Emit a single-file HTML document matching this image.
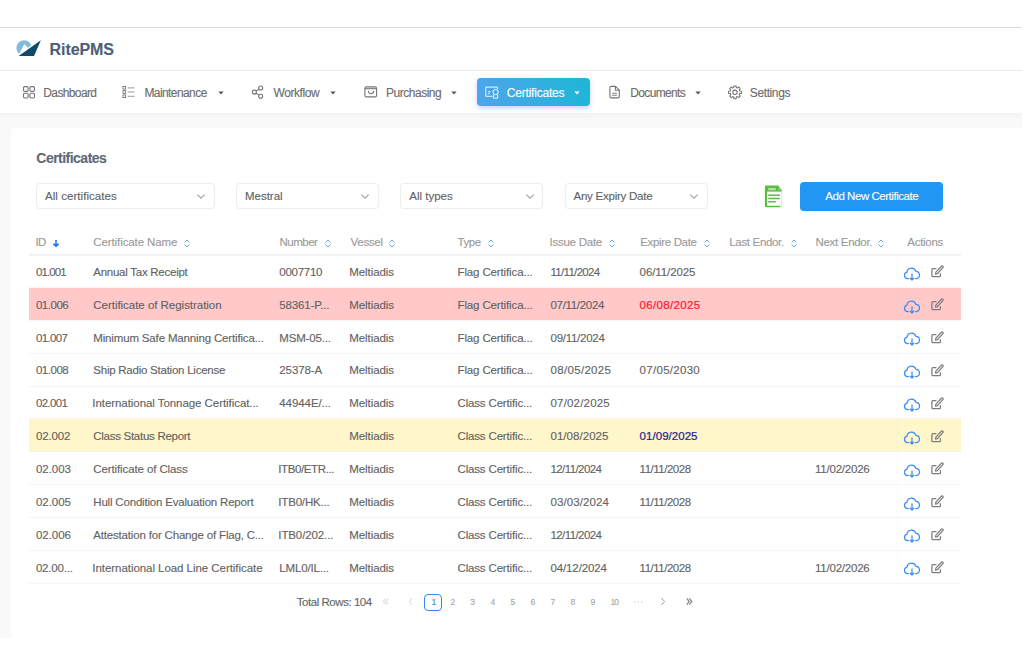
<!DOCTYPE html>
<html lang="en"><head><meta charset="utf-8"><title>RitePMS - Certificates</title>
<style>
html,body{margin:0;padding:0;background:#fff}
body{width:1024px;height:650px;position:relative;overflow:hidden;font-family:"Liberation Sans", sans-serif}
.b,.t,.i{position:absolute;display:block}
.t{white-space:nowrap;line-height:16px;height:16px;-webkit-text-stroke:.12px currentColor}
.i{overflow:visible}
</style></head>
<body>
<div class="b" style="left:0px;top:27px;width:1022px;height:1px;background:#dadada"></div>
<div class="b" style="left:0px;top:70px;width:1022px;height:1px;background:#e8e8e8"></div>
<div class="b" style="left:0px;top:113px;width:1022px;height:525px;background:#f9f9f9"></div>
<div class="b" style="left:0px;top:113px;width:1022px;height:6px;background:linear-gradient(#f2f2f2,#f9f9f9)"></div>
<div class="b" style="left:11px;top:128px;width:1013px;height:510px;background:#fff;border-radius:4px 0 0 4px"></div>
<div class="b" style="left:477px;top:78px;width:113px;height:28px;background:linear-gradient(90deg,#4ea5e9,#1db7d7);border-radius:4px;box-shadow:0 2px 5px rgba(120,110,255,.35)"></div>
<div class="b" style="left:36px;top:183px;width:179px;height:26px;box-sizing:border-box;border:1px solid #eeeeee;border-radius:4px;background:#fff;box-shadow:0 0 2px rgba(0,0,0,.03)"></div>
<div class="b" style="left:236px;top:183px;width:143px;height:26px;box-sizing:border-box;border:1px solid #eeeeee;border-radius:4px;background:#fff;box-shadow:0 0 2px rgba(0,0,0,.03)"></div>
<div class="b" style="left:400px;top:183px;width:143px;height:26px;box-sizing:border-box;border:1px solid #eeeeee;border-radius:4px;background:#fff;box-shadow:0 0 2px rgba(0,0,0,.03)"></div>
<div class="b" style="left:565px;top:183px;width:143px;height:26px;box-sizing:border-box;border:1px solid #eeeeee;border-radius:4px;background:#fff;box-shadow:0 0 2px rgba(0,0,0,.03)"></div>
<div class="b" style="left:800px;top:182px;width:143px;height:29px;background:#2196f3;border-radius:4px"></div>
<div class="b" style="left:29px;top:254px;width:932px;height:2px;background:linear-gradient(#efefef,#f6f6f6)"></div>
<div class="b" style="left:29px;top:287.05px;width:932px;height:1px;background:#f5f5f5"></div>
<div class="b" style="left:29px;top:287.90000000000003px;width:932px;height:32px;background:#ffc9c9"></div>
<div class="b" style="left:29px;top:319.90000000000003px;width:932px;height:1px;background:#f5f5f5"></div>
<div class="b" style="left:29px;top:352.75px;width:932px;height:1px;background:#f5f5f5"></div>
<div class="b" style="left:29px;top:385.6px;width:932px;height:1px;background:#f5f5f5"></div>
<div class="b" style="left:29px;top:418.45000000000005px;width:932px;height:1px;background:#f5f5f5"></div>
<div class="b" style="left:29px;top:419.3px;width:932px;height:32px;background:#fff6ca"></div>
<div class="b" style="left:29px;top:451.3px;width:932px;height:1px;background:#f5f5f5"></div>
<div class="b" style="left:29px;top:484.15000000000003px;width:932px;height:1px;background:#f5f5f5"></div>
<div class="b" style="left:29px;top:517.0px;width:932px;height:1px;background:#f5f5f5"></div>
<div class="b" style="left:29px;top:549.85px;width:932px;height:1px;background:#f5f5f5"></div>
<div class="b" style="left:29px;top:582.7px;width:932px;height:1px;background:#f5f5f5"></div>
<div class="b" style="left:897px;top:256px;width:1px;height:327px;background:rgba(0,0,0,.018)"></div>
<div class="b" style="left:424px;top:594px;width:18px;height:17px;box-sizing:border-box;border:1px solid #2d8cf0;border-radius:4px"></div>
<svg class="i" style="left:14px;top:38px" width="30" height="20" viewBox="14 38 30 20" >
<defs><clipPath id="lc"><polygon points="10,30 44,30 44,36.6 15.5,56.4 10,56.4"/></clipPath></defs>
<circle cx="24.1" cy="47.9" r="7.7" fill="#83bbdd" clip-path="url(#lc)"/>
<polygon points="17.6,57 24.4,44.1 28.4,48.4 33,52 24,58" fill="#fff"/>
<polygon points="18.6,55.9 40.9,40.3 34,55.9" fill="#0f4a68"/>
</svg>
<svg class="i" style="left:22px;top:85px" width="14" height="15" viewBox="22 85 14 15" >
<g fill="none" stroke="#747474" stroke-width="1.1">
<rect x="23.5" y="86.6" width="4.6" height="4.8" rx="1.2"/><rect x="29.9" y="86.6" width="4.6" height="4.8" rx="1.2"/>
<rect x="23.5" y="93.2" width="4.6" height="4.8" rx="1.2"/><rect x="29.9" y="93.2" width="4.6" height="4.8" rx="1.2"/></g></svg>
<svg class="i" style="left:121px;top:85px" width="15" height="15" viewBox="121 85 15 15" >
<g fill="none" stroke="#747474" stroke-width="0.9">
<rect x="123" y="86.4" width="2.7" height="2.7"/><rect x="123" y="90.6" width="2.7" height="2.7"/><rect x="123" y="94.9" width="2.7" height="2.7"/></g>
<g stroke="#9a9a9a" stroke-width="1"><path d="M127.8 87.9H134.5M127.8 92H134.5M127.8 96.3H134.5"/></g></svg>
<svg class="i" style="left:250px;top:84px" width="16" height="16" viewBox="250 84 16 16" >
<g fill="none" stroke="#747474" stroke-width="1.1">
<circle cx="260.7" cy="88" r="2"/><circle cx="254.4" cy="92.1" r="2"/><circle cx="260.7" cy="96.2" r="2"/>
<path d="M256.2 91L258.9 89.1M256.2 93.2L258.9 95.1"/></g></svg>
<svg class="i" style="left:363px;top:85px" width="16" height="14" viewBox="363 85 16 14" >
<g fill="none" stroke="#747474" stroke-width="1.1">
<rect x="364.9" y="86.9" width="11.7" height="10" rx="1.5"/><path d="M365 88.7H376.6"/><path d="M368.3 90.8a2.7 2.9 0 0 0 5.4 0"/></g></svg>
<svg class="i" style="left:484px;top:85px" width="16" height="15" viewBox="484 85 16 15" >
<g fill="none" stroke="#fff" stroke-width="1" stroke-opacity=".92">
<path d="M492.6 96.3H485.8V87.1H497.6V89"/><path d="M488.2 91.6H490.4M488.2 93.4H490"/>
<circle cx="495.6" cy="92" r="2.6"/><path d="M493.6 94.3V98.2H497.7V94.3"/></g></svg>
<svg class="i" style="left:608px;top:84px" width="14" height="16" viewBox="608 84 14 16" >
<g fill="none" stroke="#747474" stroke-width="1.1" stroke-linejoin="round">
<path d="M611.2 86.4H615.6L619.3 90.1V96.6a1.3 1.3 0 0 1 -1.3 1.3H611.2a1.3 1.3 0 0 1 -1.3 -1.3V87.7a1.3 1.3 0 0 1 1.3 -1.3Z"/>
<path d="M615.4 86.6V90.3H619.1"/></g><g stroke="#747474" stroke-width="0.9"><path d="M612.2 93.3H616.9M612.2 95.3H616.9"/></g></svg>
<svg class="i" style="left:726px;top:84px" width="18" height="17" viewBox="726 84 18 17" >
<g fill="none" stroke="#747474" stroke-width="1.05" stroke-linejoin="round">
<path d="M733.88 85.90 L736.12 85.90 L736.26 87.56 L737.46 88.06 L738.74 86.98 L740.32 88.56 L739.24 89.84 L739.74 91.04 L741.40 91.18 L741.40 93.42 L739.74 93.56 L739.24 94.76 L740.32 96.04 L738.74 97.62 L737.46 96.54 L736.26 97.04 L736.12 98.70 L733.88 98.70 L733.74 97.04 L732.54 96.54 L731.26 97.62 L729.68 96.04 L730.76 94.76 L730.26 93.56 L728.60 93.42 L728.60 91.18 L730.26 91.04 L730.76 89.84 L729.68 88.56 L731.26 86.98 L732.54 88.06 L733.74 87.56Z"/><circle cx="735" cy="92.3" r="2.2"/></g></svg>
<svg class="i" style="left:218.2px;top:90.8px" width="6" height="4" viewBox="0 0 6 4"><path d="M0.4 0.4H5.6L3 3.4Z" fill="#555"/></svg>
<svg class="i" style="left:330.4px;top:90.8px" width="6" height="4" viewBox="0 0 6 4"><path d="M0.4 0.4H5.6L3 3.4Z" fill="#555"/></svg>
<svg class="i" style="left:451.2px;top:90.8px" width="6" height="4" viewBox="0 0 6 4"><path d="M0.4 0.4H5.6L3 3.4Z" fill="#555"/></svg>
<svg class="i" style="left:695.4px;top:90.8px" width="6" height="4" viewBox="0 0 6 4"><path d="M0.4 0.4H5.6L3 3.4Z" fill="#555"/></svg>
<svg class="i" style="left:574.4px;top:90.6px" width="6" height="4" viewBox="0 0 6 4"><path d="M0.4 0.4H5.6L3 3.4Z" fill="#fff"/></svg>
<svg class="i" style="left:195.7px;top:193.4px" width="10" height="7" viewBox="0 0 10 7"><path d="M1.4 1.6L5 5.1L8.6 1.6" fill="none" stroke="#a6a6a6" stroke-width="1.3"/></svg>
<svg class="i" style="left:360px;top:193.4px" width="10" height="7" viewBox="0 0 10 7"><path d="M1.4 1.6L5 5.1L8.6 1.6" fill="none" stroke="#a6a6a6" stroke-width="1.3"/></svg>
<svg class="i" style="left:524.8px;top:193.4px" width="10" height="7" viewBox="0 0 10 7"><path d="M1.4 1.6L5 5.1L8.6 1.6" fill="none" stroke="#a6a6a6" stroke-width="1.3"/></svg>
<svg class="i" style="left:689.3px;top:193.4px" width="10" height="7" viewBox="0 0 10 7"><path d="M1.4 1.6L5 5.1L8.6 1.6" fill="none" stroke="#a6a6a6" stroke-width="1.3"/></svg>
<svg class="i" style="left:182.5px;top:239.4px" width="8" height="9" viewBox="0 0 8 9"><path d="M1.6 3.4L4 1L6.4 3.4M1.6 5.6L4 8L6.4 5.6" fill="none" stroke="#6aa5ea" stroke-width="1"/></svg>
<svg class="i" style="left:324.2px;top:239.4px" width="8" height="9" viewBox="0 0 8 9"><path d="M1.6 3.4L4 1L6.4 3.4M1.6 5.6L4 8L6.4 5.6" fill="none" stroke="#6aa5ea" stroke-width="1"/></svg>
<svg class="i" style="left:388.3px;top:239.4px" width="8" height="9" viewBox="0 0 8 9"><path d="M1.6 3.4L4 1L6.4 3.4M1.6 5.6L4 8L6.4 5.6" fill="none" stroke="#6aa5ea" stroke-width="1"/></svg>
<svg class="i" style="left:486.6px;top:239.4px" width="8" height="9" viewBox="0 0 8 9"><path d="M1.6 3.4L4 1L6.4 3.4M1.6 5.6L4 8L6.4 5.6" fill="none" stroke="#6aa5ea" stroke-width="1"/></svg>
<svg class="i" style="left:607.7px;top:239.4px" width="8" height="9" viewBox="0 0 8 9"><path d="M1.6 3.4L4 1L6.4 3.4M1.6 5.6L4 8L6.4 5.6" fill="none" stroke="#6aa5ea" stroke-width="1"/></svg>
<svg class="i" style="left:702.6px;top:239.4px" width="8" height="9" viewBox="0 0 8 9"><path d="M1.6 3.4L4 1L6.4 3.4M1.6 5.6L4 8L6.4 5.6" fill="none" stroke="#6aa5ea" stroke-width="1"/></svg>
<svg class="i" style="left:789.6px;top:239.4px" width="8" height="9" viewBox="0 0 8 9"><path d="M1.6 3.4L4 1L6.4 3.4M1.6 5.6L4 8L6.4 5.6" fill="none" stroke="#6aa5ea" stroke-width="1"/></svg>
<svg class="i" style="left:877.3px;top:239.4px" width="8" height="9" viewBox="0 0 8 9"><path d="M1.6 3.4L4 1L6.4 3.4M1.6 5.6L4 8L6.4 5.6" fill="none" stroke="#6aa5ea" stroke-width="1"/></svg>
<svg class="i" style="left:52px;top:239px" width="8" height="9" viewBox="0 0 8 9"><path d="M4 1V7.2M1.4 4.6L4 7.4L6.6 4.6" fill="none" stroke="#1f7cf2" stroke-width="1.6"/></svg>
<svg class="i" style="left:764px;top:185px" width="19" height="23" viewBox="764 185 19 23" >
<path d="M764.9 187a1.4 1.4 0 0 1 1.4 -1.4H778.3L781.9 190.3V191.8H767V205.5H780.4V207.2H766.3a1.4 1.4 0 0 1 -1.4 -1.4Z" fill="#57bd3e"/>
<path d="M767 191.8H781.9V205.5H767Z" fill="#fff"/>
<path d="M781.6 191.8V206.4" stroke="#dedede" stroke-width=".8"/>
<path d="M780.4 206.3H781.8" stroke="#dedede" stroke-width=".8"/>
<rect x="768.2" y="187.9" width="7.6" height="2.4" fill="#b7dbab"/>
<path d="M778.5 185.9L781.7 190.2H778.5Z" fill="#8ad475"/>
<g stroke="#57bd3e" stroke-width="1.5"><path d="M768.2 195.3H779.9M768.2 198.5H779.9M768.2 201.7H775.8"/></g>
</svg>
<svg class="i" style="left:902.8px;top:266.65000000000003px" width="18" height="15" viewBox="0 0 18 15"><g fill="none" stroke="#3b8ef5" stroke-width="1.25" stroke-linecap="round" stroke-linejoin="round">
<path d="M5.4 11.6H4.6A3.3 3.3 0 0 1 4 5.1A4.6 4.6 0 0 1 12.9 4.3A3.7 3.7 0 0 1 13.6 11.6H12.6"/>
<path d="M9 6.8V12.8M7.2 11.2L9 13L10.8 11.2"/></g></svg>
<svg class="i" style="left:929.7px;top:264.35px" width="15" height="15" viewBox="0 0 15 15"><g fill="none" stroke="#7d7d7d" stroke-width="1.25" stroke-linejoin="round">
<path d="M6.4 4.6H2.8A.9.9 0 0 0 1.9 5.5V11.8A.9.9 0 0 0 2.8 12.7H9.5A.9.9 0 0 0 10.4 11.8V9.3"/>
<path d="M5.5 10.1L5.9 8.1L11.4 2.2A1 1 0 0 1 12.9 3.6L7.4 9.6Z"/></g></svg>
<svg class="i" style="left:902.8px;top:299.50000000000006px" width="18" height="15" viewBox="0 0 18 15"><g fill="none" stroke="#3b8ef5" stroke-width="1.25" stroke-linecap="round" stroke-linejoin="round">
<path d="M5.4 11.6H4.6A3.3 3.3 0 0 1 4 5.1A4.6 4.6 0 0 1 12.9 4.3A3.7 3.7 0 0 1 13.6 11.6H12.6"/>
<path d="M9 6.8V12.8M7.2 11.2L9 13L10.8 11.2"/></g></svg>
<svg class="i" style="left:929.7px;top:297.20000000000005px" width="15" height="15" viewBox="0 0 15 15"><g fill="none" stroke="#7d7d7d" stroke-width="1.25" stroke-linejoin="round">
<path d="M6.4 4.6H2.8A.9.9 0 0 0 1.9 5.5V11.8A.9.9 0 0 0 2.8 12.7H9.5A.9.9 0 0 0 10.4 11.8V9.3"/>
<path d="M5.5 10.1L5.9 8.1L11.4 2.2A1 1 0 0 1 12.9 3.6L7.4 9.6Z"/></g></svg>
<svg class="i" style="left:902.8px;top:332.35px" width="18" height="15" viewBox="0 0 18 15"><g fill="none" stroke="#3b8ef5" stroke-width="1.25" stroke-linecap="round" stroke-linejoin="round">
<path d="M5.4 11.6H4.6A3.3 3.3 0 0 1 4 5.1A4.6 4.6 0 0 1 12.9 4.3A3.7 3.7 0 0 1 13.6 11.6H12.6"/>
<path d="M9 6.8V12.8M7.2 11.2L9 13L10.8 11.2"/></g></svg>
<svg class="i" style="left:929.7px;top:330.05px" width="15" height="15" viewBox="0 0 15 15"><g fill="none" stroke="#7d7d7d" stroke-width="1.25" stroke-linejoin="round">
<path d="M6.4 4.6H2.8A.9.9 0 0 0 1.9 5.5V11.8A.9.9 0 0 0 2.8 12.7H9.5A.9.9 0 0 0 10.4 11.8V9.3"/>
<path d="M5.5 10.1L5.9 8.1L11.4 2.2A1 1 0 0 1 12.9 3.6L7.4 9.6Z"/></g></svg>
<svg class="i" style="left:902.8px;top:365.20000000000005px" width="18" height="15" viewBox="0 0 18 15"><g fill="none" stroke="#3b8ef5" stroke-width="1.25" stroke-linecap="round" stroke-linejoin="round">
<path d="M5.4 11.6H4.6A3.3 3.3 0 0 1 4 5.1A4.6 4.6 0 0 1 12.9 4.3A3.7 3.7 0 0 1 13.6 11.6H12.6"/>
<path d="M9 6.8V12.8M7.2 11.2L9 13L10.8 11.2"/></g></svg>
<svg class="i" style="left:929.7px;top:362.90000000000003px" width="15" height="15" viewBox="0 0 15 15"><g fill="none" stroke="#7d7d7d" stroke-width="1.25" stroke-linejoin="round">
<path d="M6.4 4.6H2.8A.9.9 0 0 0 1.9 5.5V11.8A.9.9 0 0 0 2.8 12.7H9.5A.9.9 0 0 0 10.4 11.8V9.3"/>
<path d="M5.5 10.1L5.9 8.1L11.4 2.2A1 1 0 0 1 12.9 3.6L7.4 9.6Z"/></g></svg>
<svg class="i" style="left:902.8px;top:398.05000000000007px" width="18" height="15" viewBox="0 0 18 15"><g fill="none" stroke="#3b8ef5" stroke-width="1.25" stroke-linecap="round" stroke-linejoin="round">
<path d="M5.4 11.6H4.6A3.3 3.3 0 0 1 4 5.1A4.6 4.6 0 0 1 12.9 4.3A3.7 3.7 0 0 1 13.6 11.6H12.6"/>
<path d="M9 6.8V12.8M7.2 11.2L9 13L10.8 11.2"/></g></svg>
<svg class="i" style="left:929.7px;top:395.75000000000006px" width="15" height="15" viewBox="0 0 15 15"><g fill="none" stroke="#7d7d7d" stroke-width="1.25" stroke-linejoin="round">
<path d="M6.4 4.6H2.8A.9.9 0 0 0 1.9 5.5V11.8A.9.9 0 0 0 2.8 12.7H9.5A.9.9 0 0 0 10.4 11.8V9.3"/>
<path d="M5.5 10.1L5.9 8.1L11.4 2.2A1 1 0 0 1 12.9 3.6L7.4 9.6Z"/></g></svg>
<svg class="i" style="left:902.8px;top:430.90000000000003px" width="18" height="15" viewBox="0 0 18 15"><g fill="none" stroke="#3b8ef5" stroke-width="1.25" stroke-linecap="round" stroke-linejoin="round">
<path d="M5.4 11.6H4.6A3.3 3.3 0 0 1 4 5.1A4.6 4.6 0 0 1 12.9 4.3A3.7 3.7 0 0 1 13.6 11.6H12.6"/>
<path d="M9 6.8V12.8M7.2 11.2L9 13L10.8 11.2"/></g></svg>
<svg class="i" style="left:929.7px;top:428.6px" width="15" height="15" viewBox="0 0 15 15"><g fill="none" stroke="#7d7d7d" stroke-width="1.25" stroke-linejoin="round">
<path d="M6.4 4.6H2.8A.9.9 0 0 0 1.9 5.5V11.8A.9.9 0 0 0 2.8 12.7H9.5A.9.9 0 0 0 10.4 11.8V9.3"/>
<path d="M5.5 10.1L5.9 8.1L11.4 2.2A1 1 0 0 1 12.9 3.6L7.4 9.6Z"/></g></svg>
<svg class="i" style="left:902.8px;top:463.75000000000006px" width="18" height="15" viewBox="0 0 18 15"><g fill="none" stroke="#3b8ef5" stroke-width="1.25" stroke-linecap="round" stroke-linejoin="round">
<path d="M5.4 11.6H4.6A3.3 3.3 0 0 1 4 5.1A4.6 4.6 0 0 1 12.9 4.3A3.7 3.7 0 0 1 13.6 11.6H12.6"/>
<path d="M9 6.8V12.8M7.2 11.2L9 13L10.8 11.2"/></g></svg>
<svg class="i" style="left:929.7px;top:461.45000000000005px" width="15" height="15" viewBox="0 0 15 15"><g fill="none" stroke="#7d7d7d" stroke-width="1.25" stroke-linejoin="round">
<path d="M6.4 4.6H2.8A.9.9 0 0 0 1.9 5.5V11.8A.9.9 0 0 0 2.8 12.7H9.5A.9.9 0 0 0 10.4 11.8V9.3"/>
<path d="M5.5 10.1L5.9 8.1L11.4 2.2A1 1 0 0 1 12.9 3.6L7.4 9.6Z"/></g></svg>
<svg class="i" style="left:902.8px;top:496.6px" width="18" height="15" viewBox="0 0 18 15"><g fill="none" stroke="#3b8ef5" stroke-width="1.25" stroke-linecap="round" stroke-linejoin="round">
<path d="M5.4 11.6H4.6A3.3 3.3 0 0 1 4 5.1A4.6 4.6 0 0 1 12.9 4.3A3.7 3.7 0 0 1 13.6 11.6H12.6"/>
<path d="M9 6.8V12.8M7.2 11.2L9 13L10.8 11.2"/></g></svg>
<svg class="i" style="left:929.7px;top:494.3px" width="15" height="15" viewBox="0 0 15 15"><g fill="none" stroke="#7d7d7d" stroke-width="1.25" stroke-linejoin="round">
<path d="M6.4 4.6H2.8A.9.9 0 0 0 1.9 5.5V11.8A.9.9 0 0 0 2.8 12.7H9.5A.9.9 0 0 0 10.4 11.8V9.3"/>
<path d="M5.5 10.1L5.9 8.1L11.4 2.2A1 1 0 0 1 12.9 3.6L7.4 9.6Z"/></g></svg>
<svg class="i" style="left:902.8px;top:529.45px" width="18" height="15" viewBox="0 0 18 15"><g fill="none" stroke="#3b8ef5" stroke-width="1.25" stroke-linecap="round" stroke-linejoin="round">
<path d="M5.4 11.6H4.6A3.3 3.3 0 0 1 4 5.1A4.6 4.6 0 0 1 12.9 4.3A3.7 3.7 0 0 1 13.6 11.6H12.6"/>
<path d="M9 6.8V12.8M7.2 11.2L9 13L10.8 11.2"/></g></svg>
<svg class="i" style="left:929.7px;top:527.15px" width="15" height="15" viewBox="0 0 15 15"><g fill="none" stroke="#7d7d7d" stroke-width="1.25" stroke-linejoin="round">
<path d="M6.4 4.6H2.8A.9.9 0 0 0 1.9 5.5V11.8A.9.9 0 0 0 2.8 12.7H9.5A.9.9 0 0 0 10.4 11.8V9.3"/>
<path d="M5.5 10.1L5.9 8.1L11.4 2.2A1 1 0 0 1 12.9 3.6L7.4 9.6Z"/></g></svg>
<svg class="i" style="left:902.8px;top:562.3000000000001px" width="18" height="15" viewBox="0 0 18 15"><g fill="none" stroke="#3b8ef5" stroke-width="1.25" stroke-linecap="round" stroke-linejoin="round">
<path d="M5.4 11.6H4.6A3.3 3.3 0 0 1 4 5.1A4.6 4.6 0 0 1 12.9 4.3A3.7 3.7 0 0 1 13.6 11.6H12.6"/>
<path d="M9 6.8V12.8M7.2 11.2L9 13L10.8 11.2"/></g></svg>
<svg class="i" style="left:929.7px;top:560.0px" width="15" height="15" viewBox="0 0 15 15"><g fill="none" stroke="#7d7d7d" stroke-width="1.25" stroke-linejoin="round">
<path d="M6.4 4.6H2.8A.9.9 0 0 0 1.9 5.5V11.8A.9.9 0 0 0 2.8 12.7H9.5A.9.9 0 0 0 10.4 11.8V9.3"/>
<path d="M5.5 10.1L5.9 8.1L11.4 2.2A1 1 0 0 1 12.9 3.6L7.4 9.6Z"/></g></svg>
<svg class="i" style="left:382px;top:597px" width="8" height="9" viewBox="0 0 8 9"><path d="M3.6 1.6L1.4 4.5L3.6 7.4M6.2 1.6L4 4.5L6.2 7.4" fill="none" stroke="#cfcfcf" stroke-width="1"/></svg>
<svg class="i" style="left:407px;top:597px" width="8" height="9" viewBox="0 0 8 9"><path d="M5 1.4L2.4 4.5L5 7.6" fill="none" stroke="#d2d2d2" stroke-width="1"/></svg>
<svg class="i" style="left:659px;top:597px" width="8" height="9" viewBox="0 0 8 9"><path d="M2.4 1L5.6 4.5L2.4 8" fill="none" stroke="#9a9a9a" stroke-width="1"/></svg>
<svg class="i" style="left:685px;top:597px" width="8" height="9" viewBox="0 0 8 9"><path d="M1.8 1.4L4.2 4.5L1.8 7.6M4.4 1.4L6.8 4.5L4.4 7.6" fill="none" stroke="#8a8a8a" stroke-width="1.3"/></svg>
<svg class="i" style="left:633px;top:600px" width="11" height="4" viewBox="0 0 11 4"><g fill="#d4d4d4"><circle cx="1.8" cy="2" r=".8"/><circle cx="5.3" cy="2" r=".8"/><circle cx="8.8" cy="2" r=".8"/></g></svg>
<span class="t" style="left:49.60px;top:42.40px;font-size:16px;color:#4a6078;font-weight:bold;letter-spacing:-0.09px;">RitePMS</span>
<span class="t" style="left:43.30px;top:84.60px;font-size:12px;color:#6c6c6c;letter-spacing:-0.63px;">Dashboard</span>
<span class="t" style="left:144.40px;top:84.60px;font-size:12px;color:#6c6c6c;letter-spacing:-0.58px;">Maintenance</span>
<span class="t" style="left:273.50px;top:84.60px;font-size:12px;color:#6c6c6c;letter-spacing:-0.42px;">Workflow</span>
<span class="t" style="left:386.00px;top:84.60px;font-size:12px;color:#6c6c6c;letter-spacing:-0.48px;">Purchasing</span>
<span class="t" style="left:506.80px;top:84.60px;font-size:12px;color:#fff;letter-spacing:-0.21px;">Certificates</span>
<span class="t" style="left:630.30px;top:84.60px;font-size:12px;color:#6c6c6c;letter-spacing:-0.67px;">Documents</span>
<span class="t" style="left:749.80px;top:84.60px;font-size:12px;color:#6c6c6c;letter-spacing:-0.39px;">Settings</span>
<span class="t" style="left:36.30px;top:150.00px;font-size:14px;color:#5e6979;font-weight:bold;letter-spacing:-0.52px;">Certificates</span>
<span class="t" style="left:45.00px;top:188.20px;font-size:11.5px;color:#606266;letter-spacing:0.05px;">All certificates</span>
<span class="t" style="left:245.00px;top:188.20px;font-size:11.5px;color:#606266;letter-spacing:-0.02px;">Mestral</span>
<span class="t" style="left:409.30px;top:188.20px;font-size:11.5px;color:#606266;">All types</span>
<span class="t" style="left:573.50px;top:188.20px;font-size:11.5px;color:#606266;letter-spacing:-0.24px;">Any Expiry Date</span>
<span class="t" style="left:825.30px;top:188.30px;font-size:11.5px;color:#fff;letter-spacing:-0.46px;">Add New Certificate</span>
<span class="t" style="left:35.50px;top:234.40px;font-size:11.5px;color:#9a9a9a;letter-spacing:-0.7px;">ID</span>
<span class="t" style="left:93.30px;top:234.40px;font-size:11.5px;color:#9a9a9a;letter-spacing:-0.1px;">Certificate Name</span>
<span class="t" style="left:279.50px;top:234.40px;font-size:11.5px;color:#9a9a9a;letter-spacing:-0.51px;">Number</span>
<span class="t" style="left:350.50px;top:234.40px;font-size:11.5px;color:#9a9a9a;letter-spacing:-0.27px;">Vessel</span>
<span class="t" style="left:457.50px;top:234.40px;font-size:11.5px;color:#9a9a9a;letter-spacing:-0.41px;">Type</span>
<span class="t" style="left:549.50px;top:234.40px;font-size:11.5px;color:#9a9a9a;letter-spacing:-0.25px;">Issue Date</span>
<span class="t" style="left:640.30px;top:234.40px;font-size:11.5px;color:#9a9a9a;letter-spacing:-0.35px;">Expire Date</span>
<span class="t" style="left:729.30px;top:234.40px;font-size:11.5px;color:#9a9a9a;letter-spacing:-0.33px;">Last Endor.</span>
<span class="t" style="left:815.50px;top:234.40px;font-size:11.5px;color:#9a9a9a;letter-spacing:-0.31px;">Next Endor.</span>
<span class="t" style="left:907.30px;top:234.40px;font-size:11.5px;color:#9a9a9a;letter-spacing:-0.29px;">Actions</span>
<span class="t" style="left:35.90px;top:263.85px;font-size:11.5px;color:#626262;letter-spacing:-0.86px;">01.001</span>
<span class="t" style="left:93.30px;top:263.85px;font-size:11.5px;color:#626262;letter-spacing:-0.26px;">Annual Tax Receipt</span>
<span class="t" style="left:279.30px;top:263.85px;font-size:11.5px;color:#626262;letter-spacing:-0.27px;">0007710</span>
<span class="t" style="left:349.30px;top:263.85px;font-size:11.5px;color:#626262;letter-spacing:-0.08px;">Meltiadis</span>
<span class="t" style="left:457.50px;top:263.85px;font-size:11.5px;color:#626262;letter-spacing:-0.13px;">Flag Certifica...</span>
<span class="t" style="left:550.50px;top:263.85px;font-size:11.5px;color:#626262;letter-spacing:-0.69px;">11/11/2024</span>
<span class="t" style="left:639.60px;top:263.85px;font-size:11.5px;color:#626262;letter-spacing:-0.09px;">06/11/2025</span>
<span class="t" style="left:35.90px;top:296.70px;font-size:11.5px;color:#626262;letter-spacing:-0.46px;">01.006</span>
<span class="t" style="left:93.30px;top:296.70px;font-size:11.5px;color:#626262;letter-spacing:-0.03px;">Certificate of Registration</span>
<span class="t" style="left:279.30px;top:296.70px;font-size:11.5px;color:#626262;letter-spacing:-0.15px;">58361-P...</span>
<span class="t" style="left:349.30px;top:296.70px;font-size:11.5px;color:#626262;letter-spacing:-0.08px;">Meltiadis</span>
<span class="t" style="left:457.50px;top:296.70px;font-size:11.5px;color:#626262;letter-spacing:-0.13px;">Flag Certifica...</span>
<span class="t" style="left:550.50px;top:296.70px;font-size:11.5px;color:#626262;letter-spacing:-0.31px;">07/11/2024</span>
<span class="t" style="left:639.60px;top:296.70px;font-size:11.5px;color:#f5222d;letter-spacing:0.32px;-webkit-text-stroke:.22px currentColor;">06/08/2025</span>
<span class="t" style="left:35.90px;top:329.55px;font-size:11.5px;color:#626262;letter-spacing:-0.61px;">01.007</span>
<span class="t" style="left:93.30px;top:329.55px;font-size:11.5px;color:#626262;letter-spacing:-0.16px;">Minimum Safe Manning Certifica...</span>
<span class="t" style="left:279.30px;top:329.55px;font-size:11.5px;color:#626262;letter-spacing:-0.17px;">MSM-05...</span>
<span class="t" style="left:349.30px;top:329.55px;font-size:11.5px;color:#626262;letter-spacing:-0.08px;">Meltiadis</span>
<span class="t" style="left:457.50px;top:329.55px;font-size:11.5px;color:#626262;letter-spacing:-0.13px;">Flag Certifica...</span>
<span class="t" style="left:550.50px;top:329.55px;font-size:11.5px;color:#626262;letter-spacing:-0.26px;">09/11/2024</span>
<span class="t" style="left:35.90px;top:362.40px;font-size:11.5px;color:#626262;letter-spacing:-0.46px;">01.008</span>
<span class="t" style="left:93.30px;top:362.40px;font-size:11.5px;color:#626262;letter-spacing:-0.24px;">Ship Radio Station License</span>
<span class="t" style="left:279.30px;top:362.40px;font-size:11.5px;color:#626262;letter-spacing:-0.09px;">25378-A</span>
<span class="t" style="left:349.30px;top:362.40px;font-size:11.5px;color:#626262;letter-spacing:-0.08px;">Meltiadis</span>
<span class="t" style="left:457.50px;top:362.40px;font-size:11.5px;color:#626262;letter-spacing:-0.13px;">Flag Certifica...</span>
<span class="t" style="left:550.50px;top:362.40px;font-size:11.5px;color:#626262;letter-spacing:0.32px;">08/05/2025</span>
<span class="t" style="left:639.60px;top:362.40px;font-size:11.5px;color:#626262;letter-spacing:0.29px;">07/05/2030</span>
<span class="t" style="left:35.90px;top:395.25px;font-size:11.5px;color:#626262;letter-spacing:-0.61px;">02.001</span>
<span class="t" style="left:92.30px;top:395.25px;font-size:11.5px;color:#626262;letter-spacing:-0.06px;">International Tonnage Certificat...</span>
<span class="t" style="left:279.30px;top:395.25px;font-size:11.5px;color:#626262;letter-spacing:-0.08px;">44944E/...</span>
<span class="t" style="left:349.30px;top:395.25px;font-size:11.5px;color:#626262;letter-spacing:-0.08px;">Meltiadis</span>
<span class="t" style="left:457.50px;top:395.25px;font-size:11.5px;color:#626262;letter-spacing:-0.16px;">Class Certific...</span>
<span class="t" style="left:550.50px;top:395.25px;font-size:11.5px;color:#626262;letter-spacing:0.18px;">07/02/2025</span>
<span class="t" style="left:35.90px;top:428.10px;font-size:11.5px;color:#626262;letter-spacing:-0.11px;">02.002</span>
<span class="t" style="left:93.30px;top:428.10px;font-size:11.5px;color:#626262;letter-spacing:-0.28px;">Class Status Report</span>
<span class="t" style="left:349.30px;top:428.10px;font-size:11.5px;color:#626262;letter-spacing:-0.08px;">Meltiadis</span>
<span class="t" style="left:457.50px;top:428.10px;font-size:11.5px;color:#626262;letter-spacing:-0.16px;">Class Certific...</span>
<span class="t" style="left:550.50px;top:428.10px;font-size:11.5px;color:#626262;letter-spacing:0.04px;">01/08/2025</span>
<span class="t" style="left:639.60px;top:428.10px;font-size:11.5px;color:#1d1d8f;letter-spacing:0.04px;-webkit-text-stroke:.22px currentColor;">01/09/2025</span>
<span class="t" style="left:35.90px;top:460.95px;font-size:11.5px;color:#626262;letter-spacing:-0.01px;">02.003</span>
<span class="t" style="left:93.30px;top:460.95px;font-size:11.5px;color:#626262;letter-spacing:-0.11px;">Certificate of Class</span>
<span class="t" style="left:278.30px;top:460.95px;font-size:11.5px;color:#626262;letter-spacing:-0.39px;">ITB0/ETR...</span>
<span class="t" style="left:349.30px;top:460.95px;font-size:11.5px;color:#626262;letter-spacing:-0.08px;">Meltiadis</span>
<span class="t" style="left:457.50px;top:460.95px;font-size:11.5px;color:#626262;letter-spacing:-0.16px;">Class Certific...</span>
<span class="t" style="left:550.50px;top:460.95px;font-size:11.5px;color:#626262;letter-spacing:-0.59px;">12/11/2024</span>
<span class="t" style="left:639.60px;top:460.95px;font-size:11.5px;color:#626262;letter-spacing:-0.49px;">11/11/2028</span>
<span class="t" style="left:815.00px;top:460.95px;font-size:11.5px;color:#626262;letter-spacing:-0.22px;">11/02/2026</span>
<span class="t" style="left:35.90px;top:493.80px;font-size:11.5px;color:#626262;letter-spacing:-0.01px;">02.005</span>
<span class="t" style="left:93.30px;top:493.80px;font-size:11.5px;color:#626262;letter-spacing:-0.19px;">Hull Condition Evaluation Report</span>
<span class="t" style="left:278.30px;top:493.80px;font-size:11.5px;color:#626262;letter-spacing:-0.18px;">ITB0/HK...</span>
<span class="t" style="left:349.30px;top:493.80px;font-size:11.5px;color:#626262;letter-spacing:-0.08px;">Meltiadis</span>
<span class="t" style="left:457.50px;top:493.80px;font-size:11.5px;color:#626262;letter-spacing:-0.16px;">Class Certific...</span>
<span class="t" style="left:550.50px;top:493.80px;font-size:11.5px;color:#626262;letter-spacing:0.09px;">03/03/2024</span>
<span class="t" style="left:639.60px;top:493.80px;font-size:11.5px;color:#626262;letter-spacing:-0.49px;">11/11/2028</span>
<span class="t" style="left:35.90px;top:526.65px;font-size:11.5px;color:#626262;letter-spacing:-0.01px;">02.006</span>
<span class="t" style="left:93.30px;top:526.65px;font-size:11.5px;color:#626262;letter-spacing:-0.18px;">Attestation for Change of Flag, C...</span>
<span class="t" style="left:278.30px;top:526.65px;font-size:11.5px;color:#626262;letter-spacing:-0.11px;">ITB0/202...</span>
<span class="t" style="left:349.30px;top:526.65px;font-size:11.5px;color:#626262;letter-spacing:-0.08px;">Meltiadis</span>
<span class="t" style="left:457.50px;top:526.65px;font-size:11.5px;color:#626262;letter-spacing:-0.16px;">Class Certific...</span>
<span class="t" style="left:550.50px;top:526.65px;font-size:11.5px;color:#626262;letter-spacing:-0.59px;">12/11/2024</span>
<span class="t" style="left:35.90px;top:559.50px;font-size:11.5px;color:#626262;letter-spacing:-0.2px;">02.00...</span>
<span class="t" style="left:92.30px;top:559.50px;font-size:11.5px;color:#626262;letter-spacing:-0.05px;">International Load Line Certificate</span>
<span class="t" style="left:279.30px;top:559.50px;font-size:11.5px;color:#626262;letter-spacing:-0.16px;">LML0/IL...</span>
<span class="t" style="left:349.30px;top:559.50px;font-size:11.5px;color:#626262;letter-spacing:-0.08px;">Meltiadis</span>
<span class="t" style="left:457.50px;top:559.50px;font-size:11.5px;color:#626262;letter-spacing:-0.16px;">Class Certific...</span>
<span class="t" style="left:550.50px;top:559.50px;font-size:11.5px;color:#626262;letter-spacing:-0.13px;">04/12/2024</span>
<span class="t" style="left:639.60px;top:559.50px;font-size:11.5px;color:#626262;letter-spacing:-0.49px;">11/11/2028</span>
<span class="t" style="left:815.00px;top:559.50px;font-size:11.5px;color:#626262;letter-spacing:-0.22px;">11/02/2026</span>
<span class="t" style="left:296.80px;top:594.30px;font-size:11.5px;color:#666;letter-spacing:-0.46px;">Total Rows: 104</span>
<span class="t" style="left:450.60px;top:594.20px;font-size:8.5px;color:#a6a6a6;">2</span>
<span class="t" style="left:470.30px;top:594.20px;font-size:8.5px;color:#a6a6a6;">3</span>
<span class="t" style="left:490.40px;top:594.20px;font-size:8.5px;color:#a6a6a6;">4</span>
<span class="t" style="left:510.40px;top:594.20px;font-size:8.5px;color:#a6a6a6;">5</span>
<span class="t" style="left:530.60px;top:594.20px;font-size:8.5px;color:#a6a6a6;">6</span>
<span class="t" style="left:550.60px;top:594.20px;font-size:8.5px;color:#a6a6a6;">7</span>
<span class="t" style="left:570.40px;top:594.20px;font-size:8.5px;color:#a6a6a6;">8</span>
<span class="t" style="left:590.60px;top:594.20px;font-size:8.5px;color:#a6a6a6;">9</span>
<span class="t" style="left:431.60px;top:594.20px;font-size:8.5px;color:#2d8cf0;">1</span>
<span class="t" style="left:610.60px;top:594.20px;font-size:8.5px;color:#a6a6a6;letter-spacing:-1.13px;">10</span>
</body></html>
